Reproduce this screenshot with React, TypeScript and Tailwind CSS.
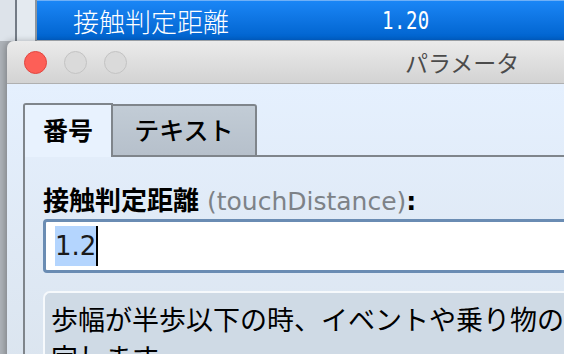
import React from "react";

const jp = { fontFamily: "'Noto Sans CJK JP', sans-serif" };
const mixed = { fontFamily: "'DejaVu Sans', 'Noto Sans CJK JP', sans-serif" };

export default function App() {
  return (
    <div className="relative w-[564px] h-[354px] overflow-hidden bg-[#aeb3b9]">
      {/* background list */}
      <div className="flex h-[41px]">
        <div className="w-[15px] bg-[#dde3ea]" />
        <div className="w-[2px] bg-[#737b85]" />
        <div className="w-[18px] bg-[#e4eaf0]" />
        <div className="w-[2px] bg-[#8e959d]" />
        <div className="flex-1 h-[40px] border-t border-[#6fb0f7] bg-gradient-to-b from-[#1a86f6] to-[#0062cd] flex items-center text-white">
          <span className="ml-[36px] text-[26px] leading-none font-light" style={jp}>
            接触判定距離
          </span>
          <span
            className="ml-[153px] text-[19px] leading-none scale-y-[1.35] tracking-[0.5px]"
            style={{ fontFamily: "'DejaVu Sans Mono', monospace" }}
          >
            1.20
          </span>
        </div>
      </div>

      {/* window */}
      <div className="absolute left-[7px] top-[41px] w-[900px] h-[400px] rounded-tl-[7px] overflow-hidden shadow-[-2px_0_6px_rgba(0,0,0,0.25)] flex flex-col">
        {/* title bar */}
        <div className="h-[43px] shrink-0 flex items-center bg-gradient-to-b from-[#ebebeb] to-[#d3d3d3] border-b border-[#b0b0b0]">
          <div className="ml-[17px] w-[23px] h-[23px] rounded-full bg-[#fd5f57] border border-[#e2453f]" />
          <div className="ml-[17px] w-[23px] h-[23px] rounded-full bg-[#dadada] border border-[#c3c3c3]" />
          <div className="ml-[17px] w-[23px] h-[23px] rounded-full bg-[#dadada] border border-[#c3c3c3]" />
          <span className="ml-[278px] text-[23px] leading-none text-[#4b4b4b]" style={jp}>
            パラメータ
          </span>
        </div>

        {/* content */}
        <div className="flex-1 bg-gradient-to-b from-[#e5f0fe] to-[#d8e1ea] pl-[16px]">
          {/* tabs */}
          <div className="flex items-end pt-[19px]">
            <div
              className="w-[90px] h-[54px] border-2 border-b-0 border-[#7f858b] rounded-tl-[3px] bg-[#e8f2fe] flex items-center justify-center pb-[2px] text-[25px] font-bold text-black"
              style={jp}
            >
              番号
            </div>
            <div
              className="w-[144px] h-[53px] border-2 border-l-0 border-[#7f858b] rounded-tr-[3px] bg-gradient-to-b from-[#c2ccd6] to-[#b6c0cb] flex items-center justify-center pb-[2px] text-[25px] font-medium text-black"
              style={jp}
            >
              テキスト
            </div>
            <div className="flex-1 border-b-2 border-[#7f858b]" />
          </div>

          {/* panel */}
          <div className="border-l-2 border-[#7f858b] pl-[18px] pt-[27px] h-[300px]">
            <div className="text-[25px] leading-[30px] whitespace-nowrap" style={mixed}>
              <span className="font-bold text-black text-[26px]" style={jp}>
                接触判定距離
              </span>
              <span className="text-[#7d8287]"> (touchDistance)</span>
              <span className="font-bold text-black">:</span>
            </div>
            <div className="mt-[2px] h-[54px] border-[3px] border-[#6a8cb3] rounded-[4px] bg-white flex items-center pl-[9px]">
              <span
                className="h-[40px] leading-[40px] bg-[#b4d5fe] text-[26px] text-[#1a1a1a]"
                style={{ fontFamily: "'DejaVu Sans', sans-serif" }}
              >
                1.2
              </span>
              <span className="w-[2px] h-[40px] bg-black" />
            </div>
            <div className="mt-[18px] border-t-2 border-l-2 border-[#f6f9fc] rounded-tl-[7px] bg-[#cfdae5] pl-[6px] pt-[7px] h-[100px]">
              <div className="text-[27px] leading-[38px] text-black whitespace-nowrap" style={jp}>
                歩幅が半歩以下の時、イベントや乗り物の接触を判
                <br />
                定します。
              </div>
            </div>
          </div>
        </div>
      </div>
    </div>
  );
}
